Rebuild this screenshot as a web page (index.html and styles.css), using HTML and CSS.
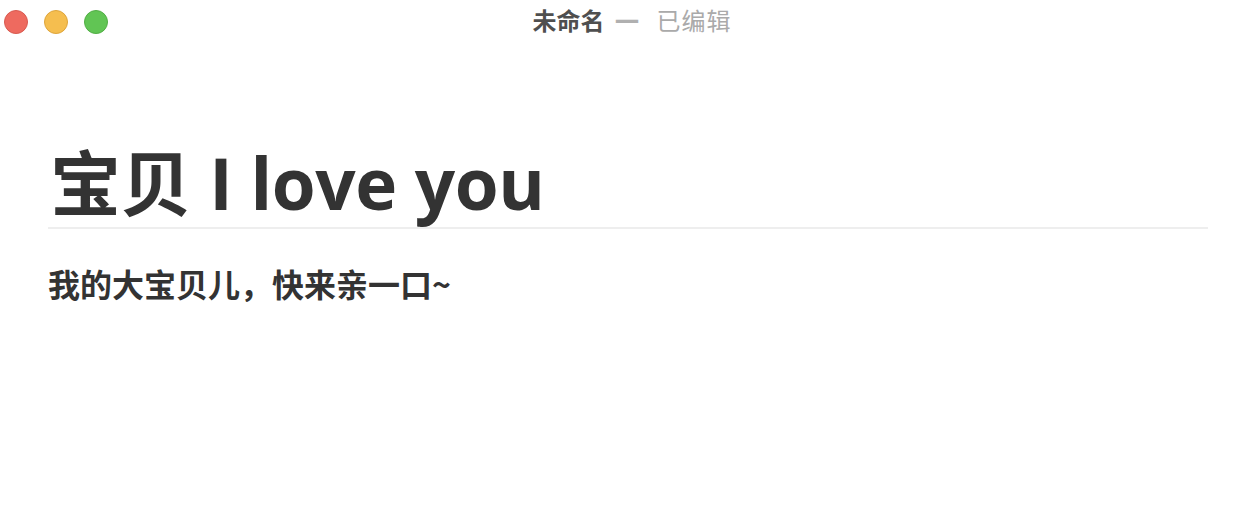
FILE: index.html
```html
<!DOCTYPE html>
<html lang="zh">
<head>
<meta charset="utf-8">
<link rel="stylesheet" href="styles.css">
</head>
<body>
<div class="window">
  <header class="titlebar">
    <div class="lights">
      <span class="light red"></span>
      <span class="light yellow"></span>
      <span class="light green"></span>
    </div>
    <div class="title"><span class="name">未命名</span><span class="dash">—</span><span class="state">已编辑</span></div>
    <div class="spacer"></div>
  </header>
  <main class="doc">
    <h1 class="heading">宝贝 I love you</h1>
    <p class="para">我的大宝贝儿，快来亲一口~</p>
  </main>
</div>
</body>
</html>
```
FILE: styles.css
```css
html, body {
  margin: 0;
  padding: 0;
  background: #ffffff;
}
body {
  font-family: "Open Sans", "Noto Sans CJK SC", sans-serif;
  color: #333333;
}
.window {
  width: 1260px;
  height: 530px;
  overflow: hidden;
}
.titlebar {
  display: grid;
  grid-template-columns: 1fr auto 1fr;
  align-items: center;
  height: 42px;
  padding: 0 4px;
}
.lights {
  display: flex;
  gap: 16px;
  align-items: center;
  margin-top: 1px;
}
.light {
  width: 24px;
  height: 24px;
  border-radius: 50%;
  box-sizing: border-box;
}
.red { background: #ee6a5f; border: 1px solid #d85a50; }
.yellow { background: #f5be4f; border: 1px solid #dea53c; }
.green { background: #61c554; border: 1px solid #52ae45; }
.title {
  font-family: "Noto Sans CJK SC", sans-serif;
  font-size: 24px;
  line-height: 32px;
  display: flex;
  align-items: center;
  margin-left: 4px;
  margin-top: -3px;
}
.name { color: #4f4f4f; font-weight: 700; }
.dash {
  font-family: "DejaVu Sans", sans-serif;
  color: #b0b0b0;
  font-weight: 700;
  font-size: 25px;
  margin: 0 17px 0 10px;
}
.state { color: #aaaaaa; font-weight: 400; letter-spacing: 1px; }
.doc {
  padding: 0 52px 0 48px;
}
.heading {
  margin: 99px 0 0 0;
  font-size: 71px;
  line-height: 84px;
  font-weight: 700;
  padding-left: 2px;
  padding-bottom: 2px;
  border-bottom: 2px solid #eeeeee;
  letter-spacing: -0.4px;
}
.para {
  margin: 30px 0 0 0;
  font-family: "Noto Sans CJK SC", sans-serif;
  font-size: 32px;
  line-height: 48px;
  font-weight: 700;
  color: #333333;
}
```
